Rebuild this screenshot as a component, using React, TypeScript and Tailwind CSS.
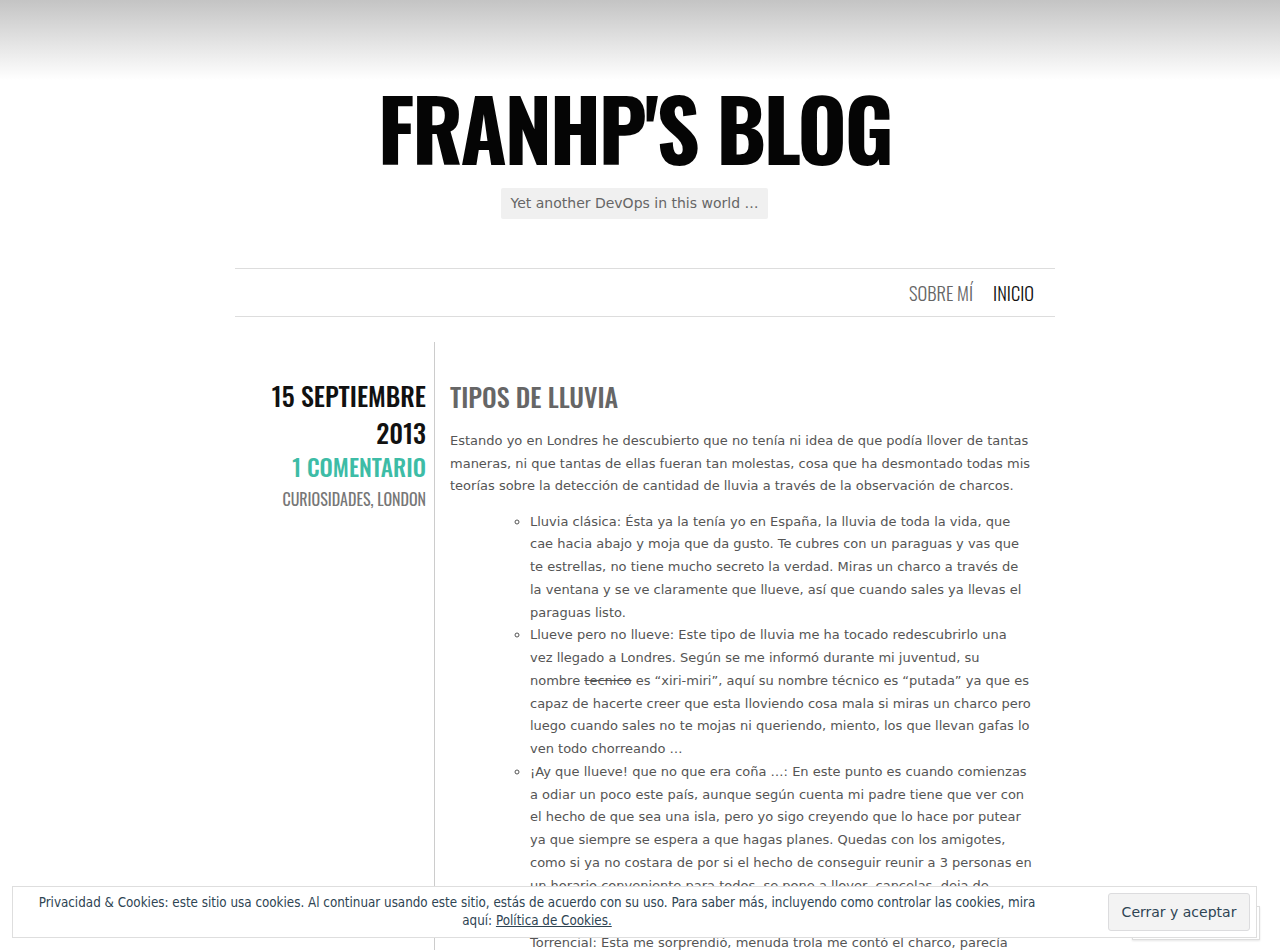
const oswald = "font-['Oswald','Roboto_Condensed',sans-serif]"

function Header() {
  return (
    <header className="bg-[linear-gradient(180deg,#c4c4c4_0px,#ffffff_80px)]">
      <div className="flex flex-col items-center pr-[11px] pt-[74px]">
        <h1 className={`${oswald} text-[85px] font-bold leading-[106px] tracking-[-2.7px] text-[#050505]`}>
          FRANHP'S BLOG
        </h1>
        <p className="mt-[8px] rounded-[2px] bg-[#f0f0f0] px-[10px] py-[6px] font-['DejaVu_Sans',sans-serif] text-[14px] leading-[19px] text-[#666]">
          Yet another DevOps in this world …
        </p>
      </div>
    </header>
  )
}

function Nav() {
  return (
    <nav
      className={`mt-[49px] flex h-[49px] items-center justify-end gap-[20px] border-y border-[#dddddd] pr-[21px] ${oswald} text-[18.5px] font-light`}
    >
      <a className="text-[#666]">SOBRE MÍ</a>
      <a className="text-[#111]">INICIO</a>
    </nav>
  )
}

export default function App() {
  return (
    <div className="min-h-[950px] bg-white">
      <Header />
      <div className="mx-auto w-[830px] pl-[10px]">
        <Nav />
        <main className="mt-[25px] flex">
          <aside className={`w-[199px] shrink-0 pr-[8px] pt-[35px] text-right ${oswald}`}>
            <div className="text-[26px] font-medium leading-[37px] text-[#111]">15 SEPTIEMBRE 2013</div>
            <a className="block text-[23.5px] font-medium leading-[31px] text-[#3dbca6]">1 COMENTARIO</a>
            <div className="mt-[4px] text-[16px] leading-[26px] text-[#777]">
              <a>CURIOSIDADES</a>, <a>LONDON</a>
            </div>
          </aside>
          <article className="min-h-[700px] flex-1 border-l border-[#cccccc] pl-[15px] pr-[23px] pt-[36px] font-['DejaVu_Sans',sans-serif] text-[13px] leading-[22.5px] text-[#555]">
            <h2 className={`mb-[15px] ${oswald} text-[26px] font-medium leading-[37px] text-[#666]`}>
              TIPOS DE LLUVIA
            </h2>
            <p className="mb-[13px]">
              Estando yo en Londres he descubierto que no tenía ni idea de que podía llover de tantas maneras, ni que tantas de ellas fueran tan molestas, cosa que ha desmontado todas mis teorías sobre la detección de cantidad de lluvia a través de la observación de charcos.
            </p>
            <ul className="ml-[40px] list-[circle] pl-[40px] leading-[22.75px]">
              <li>
                Lluvia clásica: Ésta ya la tenía yo en España, la lluvia de toda la vida, que cae hacia abajo y moja que da gusto. Te cubres con un paraguas y vas que te estrellas, no tiene mucho secreto la verdad. Miras un charco a través de la ventana y se ve claramente que llueve, así que cuando sales ya llevas el paraguas listo.
              </li>
              <li>
                Llueve pero no llueve: Este tipo de lluvia me ha tocado redescubrirlo una vez llegado a Londres. Según se me informó durante mi juventud, su nombre <del>tecnico</del> es “xiri-miri”, aquí su nombre técnico es “putada” ya que es capaz de hacerte creer que esta lloviendo cosa mala si miras un charco pero luego cuando sales no te mojas ni queriendo, miento, los que llevan gafas lo ven todo chorreando …
              </li>
              <li>
                ¡Ay que llueve! que no que era coña …: En este punto es cuando comienzas a odiar un poco este país, aunque según cuenta mi padre tiene que ver con el hecho de que sea una isla, pero yo sigo creyendo que lo hace por putear ya que siempre se espera a que hagas planes. Quedas con los amigotes, como si ya no costara de por si el hecho de conseguir reunir a 3 personas en un horario conveniente para todos, se pone a llover, cancelas, deja de llover... y te quedas en casa mirando el charco.
              </li>
              <li className="mt-[12px] list-none">
                Torrencial: Esta me sorprendió, menuda trola me contó el charco, parecía que no caía nada y en cuanto asomé la cabeza acabé empapado de arriba abajo.
              </li>
            </ul>
          </article>
        </main>
      </div>

      <div className="fixed bottom-[10px] right-[20px] h-[34px] w-[128px] border border-[#dddddd] bg-white shadow-[0_1px_2px_rgba(0,0,0,0.1)]" />
      <div className="fixed bottom-[12px] left-[12px] right-[23px] flex items-center border border-[#dedede] bg-white py-[6px] pl-[11px] pr-[6px]">
        <p className="flex-1 text-center font-['DejaVu_Sans_Condensed','DejaVu_Sans',sans-serif] text-[13.3px] leading-[18px] text-[#2e4453]">
          Privacidad &amp; Cookies: este sitio usa cookies. Al continuar usando este sitio, estás de acuerdo con su uso. Para saber más, incluyendo como controlar las cookies, mira aquí:{' '}
          <a className="underline">Política de Cookies.</a>
        </p>
        <button className="ml-[58px] h-[38px] w-[142px] rounded-[3px] border border-[#dcdcde] bg-[#f3f3f3] font-['DejaVu_Sans',sans-serif] text-[14px] text-[#2e4453]">
          Cerrar y aceptar
        </button>
      </div>
    </div>
  )
}
